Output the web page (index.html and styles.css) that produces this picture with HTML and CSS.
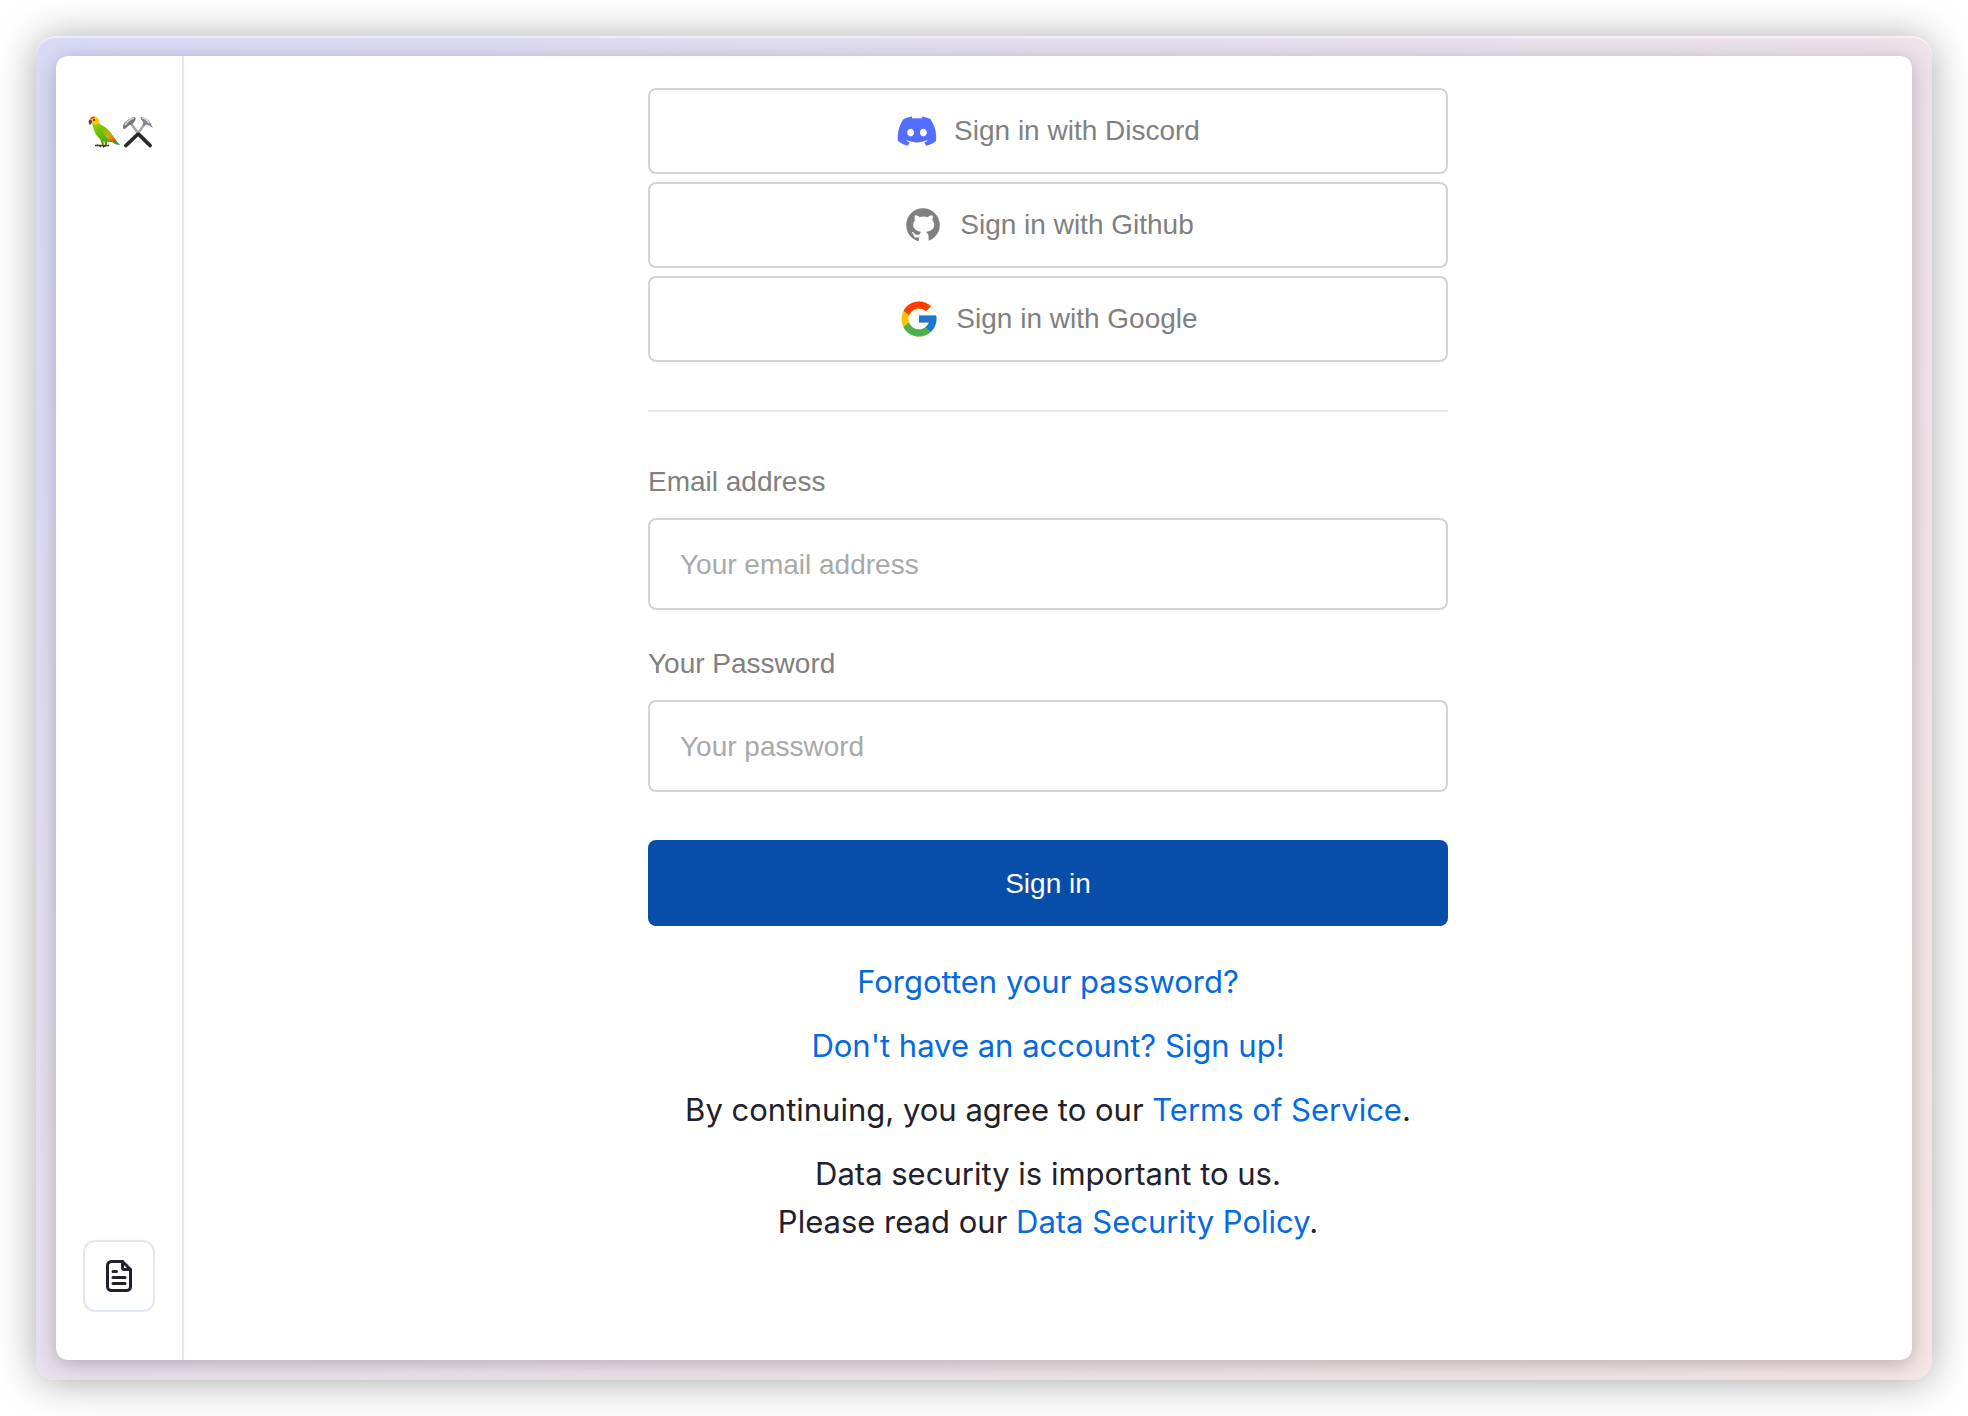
FILE: index.html
```html
<!DOCTYPE html>
<html lang="en">
<head>
<meta charset="utf-8">
<meta name="viewport" content="width=device-width, initial-scale=1">
<title>Sign in</title>
<link rel="stylesheet" href="styles.css">
</head>
<body>
<div class="frame">
  <div class="app">
    <aside class="sidebar">
      <a class="brand" href="#" aria-label="Home">
        <svg class="brand-icon" viewBox="0 0 32 32" aria-hidden="true">
          <defs>
            <linearGradient id="body" x1="0.2" y1="0" x2="0.9" y2="1">
              <stop offset="0" stop-color="#8fd400"/>
              <stop offset="0.55" stop-color="#5cb60b"/>
              <stop offset="1" stop-color="#3f9a12"/>
            </linearGradient>
            <linearGradient id="wing" x1="0.2" y1="0" x2="0.9" y2="1">
              <stop offset="0" stop-color="#7cc40c"/>
              <stop offset="0.55" stop-color="#d9a50c"/>
              <stop offset="1" stop-color="#e23a12"/>
            </linearGradient>
          </defs>
          <path d="M7 29.500h14M9 28.500l4 2.500M15 31l4-2" stroke="#4a3b35" stroke-width="1.400" fill="none"/>
          <path d="M12 22l2 7h2l-1-7zM16 23l1 6h2v-6z" fill="#4f9c17"/>
          <path d="M4 6c4-3 7 0 9 3 5 2 9 6 12 11 2 3 4 6 7 9-3 0-6-1-8-3-4 0-9 0-12-3-5-4-7-11-8-17z" fill="url(#body)"/>
          <path d="M14 11c6 2 10 7 12 11l3 4c-5 0-9-2-11-5-3-3-4-6-4-10z" fill="url(#wing)"/>
          <path d="M2 4c1-3 4-4 6-3 3 1 4 4 3 6-1 2-5 2-7 0z" fill="#f5c90a"/>
          <path d="M2 3c1-2 3-3 5-2-1 1-2 2-4 2z" fill="#ea3a1b"/>
          <path d="M1 4c2-1 3 0 3 2 0 1-1 2-2 3-1-1-2-3-1-5z" fill="#4b4447"/>
          <circle cx="6" cy="4" r="1" fill="#2a2420"/>
        </svg>
        <svg class="brand-icon" viewBox="0 0 32 32" aria-hidden="true">
          <g stroke-linecap="round">
            <path d="M10 9l6 8M22 9l-6 8" stroke="#a5a4aa" stroke-width="2.500"/>
            <path d="M17 18.500l11 11M15.500 18.500L4 29.500" stroke="#29292b" stroke-width="3.800"/>
          </g>
          <path d="M1 11c0-4 5-8 11-10 2 0 2 2 1 4-1 2-3 3-4 4-2-1-4 4-7 4-1 0-1-1-1-2z" fill="#77767e"/>
          <path d="M3 9c2-3 5-6 9-7" stroke="#d0cfd8" stroke-width="1.800" fill="none"/>
          <path d="M19 1c4 0 8 3 10 7l2 4c-2-1-5-4-7-3l-3 1c-1-1 1-3 0-4-1-2-3-3-2-5z" fill="#85848c"/>
          <path d="M20 2c3 0 5 2 7 5" stroke="#dad9e0" stroke-width="1.600" fill="none"/>
        </svg>
      </a>
      <button class="docs-button" type="button" aria-label="Documents">
        <svg class="docs-icon" viewBox="0 0 26 32" fill="none" stroke="currentColor" stroke-width="3" stroke-linecap="round" stroke-linejoin="round" aria-hidden="true">
          <path d="M16.500 1.500H5.500a4 4 0 0 0-4 4v21a4 4 0 0 0 4 4h15a4 4 0 0 0 4-4V9.500z"/>
          <path d="M16.500 1.500v6a2 2 0 0 0 2 2h6"/>
          <path d="M7 11.500h3.500M7 17.500h12M7 23.500h12"/>
        </svg>
      </button>
    </aside>
    <main class="main">
      <div class="auth">
        <div class="providers">
          <button class="provider" type="button">
            <svg class="provider-icon" viewBox="0 0 48 48" aria-hidden="true"><path fill="#536dfe" d="M39.248,10.177c-2.804-1.287-5.812-2.235-8.956-2.778c-0.057-0.01-0.114,0.016-0.144,0.068c-0.387,0.688-0.815,1.585-1.115,2.291c-3.382-0.506-6.747-0.506-10.059,0c-0.3-0.721-0.744-1.603-1.133-2.291c-0.03-0.051-0.087-0.077-0.144-0.068c-3.143,0.541-6.15,1.489-8.956,2.778c-0.024,0.01-0.045,0.028-0.059,0.051c-5.704,8.522-7.267,16.835-6.5,25.044c0.003,0.04,0.026,0.079,0.057,0.103c3.763,2.764,7.409,4.442,10.987,5.554c0.057,0.017,0.118-0.003,0.154-0.051c0.846-1.156,1.601-2.374,2.248-3.656c0.038-0.075,0.002-0.164-0.076-0.194c-1.197-0.454-2.336-1.007-3.432-1.636c-0.087-0.051-0.094-0.175-0.014-0.234c0.231-0.173,0.461-0.353,0.682-0.534c0.04-0.033,0.095-0.04,0.142-0.019c7.201,3.288,14.997,3.288,22.113,0c0.047-0.023,0.102-0.016,0.144,0.017c0.22,0.182,0.451,0.363,0.683,0.536c0.08,0.059,0.075,0.183-0.012,0.234c-1.096,0.641-2.236,1.182-3.434,1.634c-0.078,0.03-0.113,0.12-0.075,0.196c0.661,1.28,1.415,2.498,2.246,3.654c0.035,0.049,0.097,0.07,0.154,0.052c3.595-1.112,7.241-2.79,11.004-5.554c0.033-0.024,0.054-0.061,0.057-0.101c0.917-9.491-1.537-17.735-6.505-25.044C39.293,10.205,39.272,10.187,39.248,10.177z M16.703,30.273c-2.168,0-3.954-1.99-3.954-4.435s1.752-4.435,3.954-4.435c2.22,0,3.989,2.008,3.954,4.435C20.658,28.282,18.906,30.273,16.703,30.273z M31.324,30.273c-2.168,0-3.954-1.99-3.954-4.435s1.752-4.435,3.954-4.435c2.22,0,3.989,2.008,3.954,4.435C35.278,28.282,33.544,30.273,31.324,30.273z"/></svg>
            Sign in with Discord
          </button>
          <button class="provider" type="button">
            <svg class="provider-icon" viewBox="0 0 30 30" fill="currentColor" aria-hidden="true"><path d="M15,3C8.373,3,3,8.373,3,15c0,5.623,3.872,10.328,9.092,11.63C12.036,26.468,12,26.28,12,26.047v-2.051c-0.487,0-1.303,0-1.508,0c-0.821,0-1.551-0.353-1.905-1.009c-0.393-0.729-0.461-1.844-1.435-2.526c-0.289-0.227-0.069-0.486,0.264-0.451c0.615,0.174,1.125,0.596,1.605,1.222c0.478,0.627,0.703,0.769,1.596,0.769c0.433,0,1.081-0.025,1.691-0.121c0.328-0.833,0.895-1.6,1.588-1.962c-3.996-0.411-5.903-2.399-5.903-5.098c0-1.162,0.495-2.286,1.336-3.233C9.053,10.647,8.706,8.73,9.435,8c1.798,0,2.885,1.166,3.146,1.481C13.477,9.174,14.461,9,15.495,9c1.036,0,2.024,0.174,2.922,0.483C18.675,9.17,19.763,8,21.565,8c0.732,0.731,0.381,2.656,0.102,3.594c0.836,0.945,1.328,2.066,1.328,3.226c0,2.697-1.904,4.684-5.894,5.097C18.199,20.49,19,22.1,19,23.313v2.734c0,0.104-0.023,0.179-0.035,0.268C23.641,24.676,27,20.236,27,15C27,8.373,21.627,3,15,3z"/></svg>
            Sign in with Github
          </button>
          <button class="provider" type="button">
            <svg class="provider-icon" viewBox="0 0 48 48" aria-hidden="true">
              <path fill="#FFC107" d="M43.611,20.083H42V20H24v8h11.303c-1.649,4.657-6.08,8-11.303,8c-6.627,0-12-5.373-12-12c0-6.627,5.373-12,12-12c3.059,0,5.842,1.154,7.961,3.039l5.657-5.657C34.046,6.053,29.268,4,24,4C12.955,4,4,12.955,4,24c0,11.045,8.955,20,20,20c11.045,0,20-8.955,20-20C44,22.659,43.862,21.35,43.611,20.083z"/>
              <path fill="#FF3D00" d="M6.306,14.691l6.571,4.819C14.655,15.108,18.961,12,24,12c3.059,0,5.842,1.154,7.961,3.039l5.657-5.657C34.046,6.053,29.268,4,24,4C16.318,4,9.656,8.337,6.306,14.691z"/>
              <path fill="#4CAF50" d="M24,44c5.166,0,9.86-1.977,13.409-5.192l-6.19-5.238C29.211,35.091,26.715,36,24,36c-5.202,0-9.619-3.317-11.283-7.946l-6.522,5.025C9.505,39.556,16.227,44,24,44z"/>
              <path fill="#1976D2" d="M43.611,20.083H42V20H24v8h11.303c-0.792,2.237-2.231,4.166-4.087,5.571l6.19,5.238C36.971,39.205,44,34,44,24C44,22.659,43.862,21.35,43.611,20.083z"/>
            </svg>
            Sign in with Google
          </button>
        </div>
        <hr class="divider">
        <form class="form">
          <div class="field">
            <label class="label" for="email">Email address</label>
            <input class="input" id="email" type="email" placeholder="Your email address">
          </div>
          <div class="field">
            <label class="label" for="password">Your Password</label>
            <input class="input" id="password" type="password" placeholder="Your password">
          </div>
          <button class="submit" type="submit">Sign in</button>
        </form>
        <div class="notes">
          <p class="note"><a class="link" href="#">Forgotten your password?</a></p>
          <p class="note"><a class="link" href="#">Don't have an account? Sign up!</a></p>
          <p class="note">By continuing, you agree to our <a class="link" href="#">Terms of Service</a>.</p>
          <p class="note">Data security is important to us.<br>Please read our <a class="link" href="#">Data Security Policy</a>.</p>
        </div>
      </div>
    </main>
  </div>
</div>
</body>
</html>
```
FILE: styles.css
```css
* {
  box-sizing: border-box;
}

body {
  margin: 0;
  min-height: 100vh;
  padding: 36px;
  display: flex;
  background: #fff;
  color: #1c2024;
  font-family: "Liberation Sans", Arial, sans-serif;
  font-size: 28px;
}

.frame {
  flex: 1;
  min-width: 0;
  display: flex;
  padding: 20px;
  border-radius: 20px;
  background: linear-gradient(135deg, #d8d9f6, #eee2ea 60%, #f5e5e4);
  box-shadow: 0 2px 40px rgba(0, 0, 0, 0.34), inset 0 2px 1px rgba(255, 255, 255, 0.5);
}

.app {
  flex: 1;
  min-width: 0;
  display: flex;
  border-radius: 12px;
  background: #fff;
  box-shadow: 0 4px 20px rgba(0, 0, 0, 0.24);
}

.sidebar {
  flex: none;
  width: 128px;
  padding: 60px 0 48px;
  display: flex;
  flex-direction: column;
  align-items: center;
  justify-content: space-between;
  border-right: 2px solid #e2e8f4;
}

.brand {
  display: flex;
  gap: 2px;
  padding-left: 4px;
}

.brand-icon {
  width: 32px;
  height: 32px;
}

.docs-button {
  width: 72px;
  height: 72px;
  padding: 0;
  display: grid;
  place-items: center;
  border: 2px solid #e2e8f4;
  border-radius: 12px;
  background: #fff;
  color: #21202b;
}

.docs-icon {
  width: 26px;
  height: 32px;
}

.main {
  flex: 1;
  min-width: 0;
  padding: 32px 24px;
}

.auth {
  max-width: 800px;
  margin: 0 auto;
}

.providers {
  display: grid;
  gap: 8px;
}

.provider {
  min-height: 86px;
  padding: 0 16px;
  display: flex;
  align-items: center;
  justify-content: center;
  gap: 16px;
  border: 2px solid #d3d3d3;
  border-radius: 8px;
  background: #fff;
  color: #808080;
  font: inherit;
}

.provider-icon {
  width: 42px;
  height: 42px;
}

.divider {
  height: 2px;
  margin: 48px 0 52px;
  border: 0;
  background: #eaeaea;
}

.field {
  display: grid;
  gap: 18px;
  margin-bottom: 36px;
}

.label {
  color: #808080;
  line-height: 36px;
}

.input {
  width: 100%;
  height: 92px;
  padding: 2px 30px 0;
  border: 2px solid #d3d3d3;
  border-radius: 8px;
  background: #fff;
  color: #1c2024;
  font: inherit;
}

.input::placeholder {
  color: #a9a9a9;
  opacity: 1;
}

.submit {
  width: 100%;
  min-height: 86px;
  margin-top: 12px;
  padding: 2px 16px 0;
  border: 0;
  border-radius: 8px;
  background: #074ea8;
  color: #fff;
  font: inherit;
}

.notes {
  margin-top: 32px;
  display: grid;
  gap: 16px;
  color: #21202b;
  font-family: Inter, "Open Sans", sans-serif;
  font-size: 31px;
  line-height: 48px;
  text-align: center;
}

.note {
  margin: 0;
}

.link {
  color: #0569df;
  text-decoration: none;
}
```
